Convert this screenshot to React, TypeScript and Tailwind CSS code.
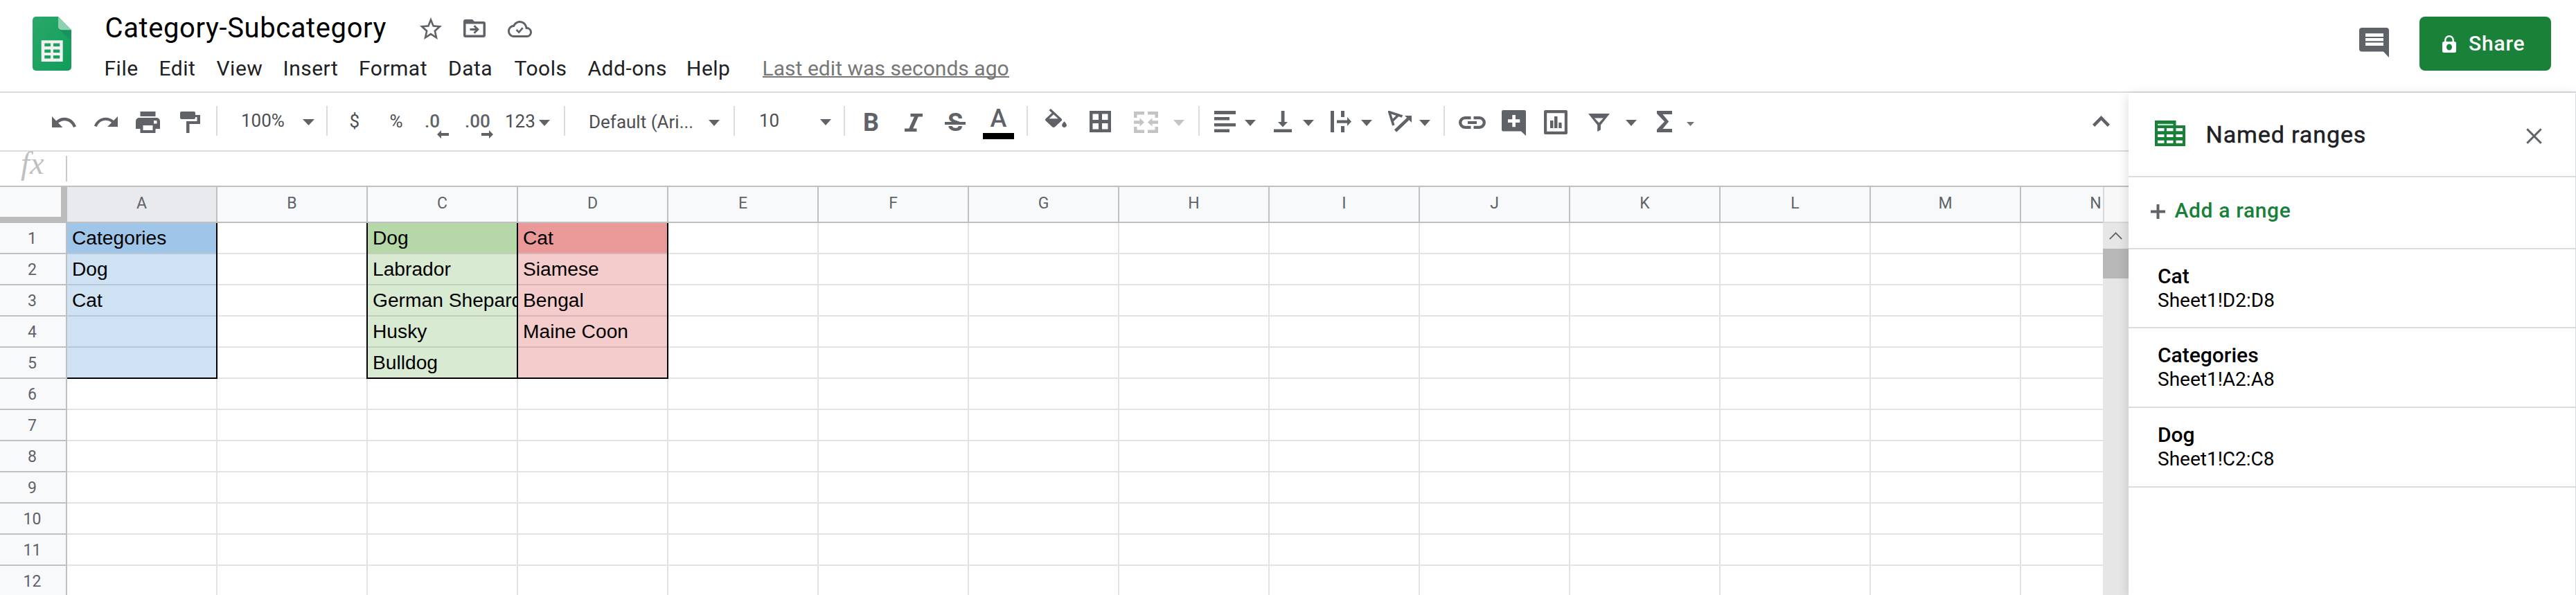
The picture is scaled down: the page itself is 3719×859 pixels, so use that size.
import React from 'react';

type GlyphProps = { c: string; vb: string; children: React.ReactNode };

function Glyph({ c, vb, children }: GlyphProps) {
  return (
    <svg className={'block shrink-0 ' + c} viewBox={vb} preserveAspectRatio="none" fill="currentColor" aria-hidden="true">
      {children}
    </svg>
  );
}

function Caret({ c }: { c: string }) {
  return (
    <Glyph c={c} vb="0 0 16 9">
      <path d="M0 0h16L8 9z" />
    </Glyph>
  );
}

function Divider({ c }: { c: string }) {
  return <div className={'mt-[19px] h-[43px] w-[2px] shrink-0 bg-[#dadce0] ' + c} />;
}

const MENUS = [
  { label: 'File', w: 'w-[79px]' },
  { label: 'Edit', w: 'w-[83px]' },
  { label: 'View', w: 'w-[96px]' },
  { label: 'Insert', w: 'w-[109.5px]' },
  { label: 'Format', w: 'w-[129px]' },
  { label: 'Data', w: 'w-[95.5px]' },
  { label: 'Tools', w: 'w-[106px]' },
  { label: 'Add-ons', w: 'w-[142.5px]' },
  { label: 'Help', w: 'w-[105.5px]' },
];

function Header() {
  return (
    <header className="flex h-[134px] items-start border-b-2 border-[#dadce0]">
      <svg className="mt-[24px] ml-[47px] h-[78px] w-[56px] shrink-0" viewBox="0 0 56 78">
        <defs>
          <linearGradient id="sheet" x1="0" y1="0" x2="1" y2="1">
            <stop offset="0" stopColor="#2aa86b" />
            <stop offset="1" stopColor="#0f9d58" />
          </linearGradient>
          <linearGradient id="fold" x1="0" y1="0" x2="1" y2="1">
            <stop offset="0" stopColor="#178a5c" />
            <stop offset="1" stopColor="#1a9a62" />
          </linearGradient>
        </defs>
        <path d="M5 0h32l19 19.3V73a5 5 0 0 1-5 5H5a5 5 0 0 1-5-5V5a5 5 0 0 1 5-5z" fill="url(#sheet)" />
        <path d="M38.500 18L56 36V19.300z" fill="url(#fold)" />
        <path d="M37 0l19 19.300H42a5 5 0 0 1-5-5z" fill="#8ed1b1" />
        <path
          fillRule="evenodd"
          fill="#f1f1f1"
          d="M12.700 34.300h31V65h-31zM17.300 38.500v4.500H26v-4.500zM30 38.500v4.500h9.300v-4.500zM17.300 47.500V52H26v-4.500zM30 47.500V52h9.300v-4.500zM17.300 56v4.500H26V56zM30 56v4.500h9.300V56z"
        />
      </svg>
      <div className="ml-[47.500px] flex flex-col">
        <div className="flex h-[79px] items-start text-[#5f6368]">
          <div className="mt-[17px] ml-[1px] w-[454px] text-[40px] leading-[48px] tracking-[0.600px] whitespace-nowrap text-black">
            Category-Subcategory
          </div>
          <Glyph c="mt-[25px] h-[32px] w-[32px]" vb="2 2 20 19">
            <path d="M22 9.240l-7.190-.620L12 2 9.190 8.630 2 9.240l5.460 4.730L5.820 21 12 17.270 18.180 21l-1.630-7.030L22 9.240zM12 15.400l-3.760 2.270 1-4.280-3.320-2.880 4.380-.380L12 6.100l1.710 4.040 4.380.380-3.320 2.880 1 4.280L12 15.400z" />
          </Glyph>
          <Glyph c="mt-[28px] ml-[31px] h-[26px] w-[32px]" vb="0 0 32 26">
            <path fillRule="evenodd" d="M3 0h10l3 3h13a3 3 0 0 1 3 3v17a3 3 0 0 1-3 3H3a3 3 0 0 1-3-3V3a3 3 0 0 1 3-3zM3.500 6.500v16h25v-16z" />
            <path d="M9.500 14.500H20M15.500 9.200l5.300 5.300-5.300 5.300" fill="none" stroke="currentColor" strokeWidth="3" />
          </Glyph>
          <Glyph c="mt-[30px] ml-[32px] h-[24px] w-[35px]" vb="0 4 24 16">
            <path d="M19.350 10.040C18.670 6.590 15.640 4 12 4 9.110 4 6.600 5.640 5.350 8.040 2.340 8.360 0 10.910 0 14c0 3.310 2.690 6 6 6h13c2.760 0 5-2.240 5-5 0-2.640-2.050-4.780-4.650-4.960zM19 18H6c-2.210 0-4-1.790-4-4 0-2.050 1.530-3.760 3.560-3.970l1.070-.110.500-.950C8.080 7.140 9.940 6 12 6c2.620 0 4.880 1.860 5.390 4.430l.300 1.500 1.530.110c1.560.100 2.780 1.410 2.780 2.960 0 1.650-1.350 3-3 3z" />
            <path d="M8.600 12.700l2.500 2.400 3.800-4.300" fill="none" stroke="currentColor" strokeWidth="1.800" />
          </Glyph>
        </div>
        <nav className="flex text-[30px] leading-[40px] tracking-[0.500px] whitespace-nowrap text-[#202124]">
          {MENUS.map((m) => (
            <div key={m.label} className={m.w}>
              {m.label}
            </div>
          ))}
          <a className="ml-[4px] h-[33px] border-b-2 border-[#777] tracking-[0.040px] text-[#777]">Last edit was seconds ago</a>
        </nav>
      </div>
      <Glyph c="mt-[40px] ml-auto h-[43px] w-[43px] text-[#5f6368]" vb="0 0 43 43">
        <path fillRule="evenodd" d="M4 0h35a4 4 0 0 1 4 4v39l-8-8.500H4a4 4 0 0 1-4-4V4a4 4 0 0 1 4-4zM9 8.300V13h26V8.300zM9 15v4.300h26V15zM9 21.500V26h26v-4.500z" />
      </Glyph>
      <button className="mt-[24px] mr-[36px] ml-[44px] flex h-[78px] w-[190px] items-center rounded-[8px] bg-[#1a8139] pl-[33px] text-white">
        <Glyph c="h-[25px] w-[20px]" vb="0 0 20 25">
          <path fillRule="evenodd" d="M2.500 9H3V7a7 7 0 0 1 14 0v2h.500A2.500 2.500 0 0 1 20 11.500v11a2.500 2.500 0 0 1-2.500 2.500h-15A2.500 2.500 0 0 1 0 22.500v-11A2.500 2.500 0 0 1 2.500 9zM5.500 9h9V7a4.500 4.500 0 0 0-9 0zM10 12.500a4 4.500 0 1 0 0 9 4 4.500 0 1 0 0-9z" />
        </Glyph>
        <span className="ml-[18px] text-[30px] leading-[40px] font-medium tracking-[0.800px]">Share</span>
      </button>
    </header>
  );
}

function Toolbar() {
  return (
    <div className="flex h-[85px] items-start border-b-2 border-[#dadce0] text-[26px] leading-[32px] whitespace-nowrap text-[#5f6368]">
      <Glyph c="mt-[34px] ml-[75px] h-[16px] w-[35px]" vb="2 7 20.470 9">
        <path d="M12.500 8c-2.650 0-5.050.990-6.900 2.600L2 7v9h9l-3.620-3.620c1.390-1.160 3.160-1.880 5.120-1.880 3.540 0 6.550 2.310 7.600 5.500l2.370-.780C21.080 11.030 17.150 8 12.500 8z" />
      </Glyph>
      <Glyph c="mt-[34px] ml-[26px] h-[15px] w-[34px]" vb="1.540 7 20.460 9">
        <path d="M18.400 10.600C16.550 8.990 14.150 8 11.500 8c-4.650 0-8.580 3.030-9.960 7.220L3.900 16c1.050-3.190 4.050-5.500 7.600-5.500 1.950 0 3.730.720 5.120 1.880L13 16h9V7l-3.600 3.600z" />
      </Glyph>
      <Glyph c="mt-[27px] ml-[26px] h-[31px] w-[35px]" vb="0 0 35 31">
        <path fillRule="evenodd" d="M6.500 0h22v7h-22zM5 9h25a5 5 0 0 1 5 5v11h-6.500v6h-22v-6H0V14a5 5 0 0 1 5-5zM10.500 20v7h14v-7zM26 13v4.500h4.500V13z" />
      </Glyph>
      <Glyph c="mt-[27px] ml-[29px] h-[31px] w-[29px]" vb="0 0 29 31">
        <path d="M2 0h18a2 2 0 0 1 2 2v3h7v13H13.500v13H9V14h15.500V8H22v1a2 2 0 0 1-2 2H2a2 2 0 0 1-2-2V2a2 2 0 0 1 2-2z" />
      </Glyph>
      <Divider c="ml-[23px]" />
      <div className="mt-[24px] ml-[34px] w-[89px]">
        <div className="text-[#4d4f52]">100%</div>
      </div>
      <Caret c="mt-[38px] h-[9px] w-[17px]" />
      <Divider c="ml-[17px]" />
      <div className="mt-[25px] ml-[31.500px] w-[58px] text-[#4d4f52]">$</div>
      <div className="mt-[25px] w-[51.500px] text-[#4d4f52]">%</div>
      <div className="mt-[25px] flex h-[40px] w-[34px] flex-col font-medium">
        <div className="h-[28.500px] -ml-[1px]">.0</div>
        <Glyph c="h-[12px] w-[17px] self-end" vb="0 0 17 12">
          <path d="M0 6l6-6v4h11v4H6v4z" />
        </Glyph>
      </div>
      <div className="mt-[25px] ml-[24px] flex h-[40px] w-[40px] flex-col font-medium">
        <div className="h-[28.500px] -ml-[1px]">.00</div>
        <Glyph c="h-[12px] w-[17px] self-end" vb="0 0 17 12">
          <path d="M17 6l-6-6v4H0v4h11v4z" />
        </Glyph>
      </div>
      <div className="mt-[25px] ml-[17px] w-[49px] text-[#4d4f52]">123</div>
      <Caret c="mt-[39px] h-[9px] w-[16px]" />
      <Divider c="ml-[20px]" />
      <div className="mt-[26px] ml-[34px] w-[173px] text-[#4d4f52]">Default (Ari...</div>
      <Caret c="mt-[39px] h-[9px] w-[16px]" />
      <Divider c="ml-[20px]" />
      <div className="mt-[24px] ml-[35px] w-[88px] text-[#4d4f52]">10</div>
      <Caret c="mt-[38px] h-[9px] w-[16px]" />
      <Divider c="ml-[18px]" />
      <div className="mt-[23px] ml-[26px] w-[23px] text-[36px] leading-[40px] font-bold">B</div>
      <Glyph c="mt-[30px] ml-[37px] h-[26px] w-[26px]" vb="0 0 26 26">
        <path d="M8.500 0H26v4.500h-6.200L12.200 21.500h5.300V26H0v-4.500h6.300L13.900 4.500H8.500z" />
      </Glyph>
      <div className="relative mt-[23px] ml-[32px] w-[30px] text-center text-[36px] leading-[40px] font-bold">
        S
        <div className="absolute top-[19px] left-0 h-[6px] w-[30px] border-b-2 border-white bg-[#5f6368]" />
      </div>
      <div className="mt-[17px] ml-[25px] flex w-[45px] flex-col text-center text-[36px] leading-[40px] font-medium">
        <div className="h-[41px]">A</div>
        <div className="h-[9px] bg-black" />
      </div>
      <Divider c="ml-[18px]" />
      <Glyph c="mt-[23px] ml-[25px] h-[27px] w-[31px]" vb="3 0 18 17">
        <path d="M16.560 8.940L7.620 0 6.210 1.410l2.380 2.380-5.150 5.150c-.590.590-.590 1.540 0 2.120l5.500 5.500c.290.290.680.440 1.060.440s.770-.150 1.060-.440l5.500-5.500c.590-.580.590-1.530 0-2.120zM6.210 9L10 5.210 13.790 9H6.210zM19 11.500s-2 2.170-2 3.500c0 1.100.900 2 2 2s2-.900 2-2c0-1.330-2-3.500-2-3.500z" />
      </Glyph>
      <Glyph c="mt-[26px] ml-[33px] h-[31px] w-[31px]" vb="0 0 31 31">
        <path fillRule="evenodd" d="M0 0h31v31H0zM4.500 4.500V13H13V4.500zM18 4.500V13h8.500V4.500zM4.500 18v8.500H13V18zM18 18v8.500h8.500V18z" />
      </Glyph>
      <Glyph c="mt-[27px] ml-[33px] h-[31px] w-[35px] text-[#c3c4c6]" vb="0 0 35 31">
        <path d="M0 0h15v4.500H4.500V9H0zM20 0h15v9h-4.500V4.500H20zM0 22h4.500v4.500H15V31H0zM30.500 22H35v9H20v-4.500h10.500zM0 13.300h8.500V9.500l6.500 6-6.500 6v-3.800H0zM35 13.300h-8.500V9.500l-6.500 6 6.500 6v-3.800H35z" />
      </Glyph>
      <Caret c="mt-[39px] ml-[22px] h-[9px] w-[16px] text-[#c3c4c6]" />
      <Divider c="ml-[20px]" />
      <Glyph c="mt-[26px] ml-[21px] h-[31px] w-[31px]" vb="0 0 31 31">
        <path d="M0 0h31v5H0zM0 9h22v4.500H0zM0 18h31v4.500H0zM0 26.500h22V31H0z" />
      </Glyph>
      <Caret c="mt-[39px] ml-[13px] h-[9px] w-[16px]" />
      <Glyph c="mt-[26px] ml-[26px] h-[31px] w-[26px]" vb="0 0 26 31">
        <path d="M10.700 0h4.800v16h4.500l-7 7.500-7-7.500h4.700zM0 26.500h26V31H0z" />
      </Glyph>
      <Caret c="mt-[39px] ml-[16px] h-[9px] w-[16px]" />
      <Glyph c="mt-[26px] ml-[24px] h-[31px] w-[30px]" vb="0 0 30 31">
        <path d="M0 0h5v31H0zM15 0h5v9h-5zM15 22h5v9h-5zM9 13.500h15V9l6 6.500-6 6.500v-4.300H9z" />
      </Glyph>
      <Caret c="mt-[39px] ml-[14px] h-[9px] w-[16px]" />
      <Glyph c="mt-[26px] ml-[23px] h-[31px] w-[34px]" vb="0 0 34 31">
        <path d="M7.800 21L1.800 1.800 20.500 8M6.200 14.500L14.500 6.500" fill="none" stroke="currentColor" strokeWidth="3.600" />
        <path d="M10.500 29L29 11.500" fill="none" stroke="currentColor" strokeWidth="4.600" />
        <path d="M24 7h10v10z" />
      </Glyph>
      <Caret c="mt-[39px] ml-[11px] h-[9px] w-[16px]" />
      <Divider c="ml-[19px]" />
      <Glyph c="mt-[34px] ml-[20px] h-[18px] w-[39px]" vb="0 0 39 18">
        <path d="M17.500 2.200H9a6.800 6.800 0 0 0 0 13.600h8.500M21.500 2.200H30a6.800 6.800 0 0 1 0 13.600h-8.500" fill="none" stroke="currentColor" strokeWidth="4.300" />
        <path d="M13 7h13v4H13z" />
      </Glyph>
      <Glyph c="mt-[25px] ml-[23px] h-[37px] w-[35px]" vb="0 0 35 37">
        <path fillRule="evenodd" d="M2 0h31a2 2 0 0 1 2 2v35l-7-6.500H2a2 2 0 0 1-2-2V2a2 2 0 0 1 2-2zM15.300 7v6.300H9V18h6.300v6.300H20V18h6.300v-4.700H20V7z" />
      </Glyph>
      <Glyph c="mt-[25px] ml-[26px] h-[35px] w-[34px]" vb="0 0 34 35">
        <path fillRule="evenodd" d="M2 0h30a2 2 0 0 1 2 2v31a2 2 0 0 1-2 2H2a2 2 0 0 1-2-2V2a2 2 0 0 1 2-2zM4.200 4.200v26.600h25.600V4.200z" />
        <path d="M9 15h4.500v11H9zM15 9h4.500v17H15zM21.300 18h4.300v8h-4.300z" />
      </Glyph>
      <Glyph c="mt-[30px] ml-[30px] h-[26px] w-[31px]" vb="0 0 31 26">
        <path fillRule="evenodd" d="M0 0h31L17.900 16.500v7L13.200 26v-9.500zM9 6.500l6.500 6.800 6.300-6.800z" />
      </Glyph>
      <Caret c="mt-[39px] ml-[23px] h-[9px] w-[16px]" />
      <Glyph c="mt-[26px] ml-[29px] h-[31px] w-[22px]" vb="0 0 22 31">
        <path d="M0 0h22v5H8.500l8.700 10.500L8.500 26H22v5H0v-4l11-11.500L0 4z" />
      </Glyph>
      <Caret c="mt-[42px] ml-[21px] h-[6px] w-[11px] text-[#757575]" />
      <Glyph c="mt-[33px] ml-[575px] h-[16px] w-[25px]" vb="0 0 25 16">
        <path d="M12.500 0L25 12.700 21.800 16l-9.300-9.500L3.200 16 0 12.700z" />
      </Glyph>
    </div>
  );
}

const COLUMNS = ['A', 'B', 'C', 'D', 'E', 'F', 'G', 'H', 'I', 'J', 'K', 'L', 'M', 'N'];
const ROWS = [1, 2, 3, 4, 5, 6, 7, 8, 9, 10, 11, 12];

const DATA: Record<string, string[]> = {
  A: ['Categories', 'Dog', 'Cat', '', ''],
  C: ['Dog', 'Labrador', 'German Shepard', 'Husky', 'Bulldog'],
  D: ['Cat', 'Siamese', 'Bengal', 'Maine Coon', ''],
};

const HEAD_FILL: Record<string, string> = { A: 'bg-[#9fc5e8]', C: 'bg-[#b6d7a8]', D: 'bg-[#ea9999]' };
const BODY_FILL: Record<string, string> = { A: 'bg-[#cfe2f3]', C: 'bg-[#d9ead3]', D: 'bg-[#f4cccc]' };
const HEAD_LINE: Record<string, string> = { A: 'border-[#b7c9d9]', C: 'border-[#c0d0bb]', D: 'border-[#d9b6b6]' };

function Cell({ col, row }: { col: string; row: number }) {
  const inTable = row <= 5;
  const filled = inTable && col in DATA;
  const fill = filled ? (row === 1 ? HEAD_FILL[col] : BODY_FILL[col]) : '';
  const bottom = filled ? (row === 5 ? 'border-black' : HEAD_LINE[col]) : 'border-[#e2e3e3]';
  const edge = inTable && 'ABCD'.includes(col) ? 'bg-black' : 'bg-[#e2e3e3]';
  return (
    <div className="flex h-[45px] w-[217px] shrink-0">
      <div className={'w-[215px] overflow-hidden border-b-2 pl-[7px] leading-[43px] whitespace-nowrap text-black ' + fill + ' ' + bottom}>
        {filled ? DATA[col][row - 1] : ''}
      </div>
      <div className={'w-[2px] ' + edge} />
    </div>
  );
}

function Grid() {
  return (
    <div className="flex min-h-0 flex-1">
      <div className="w-[3036px] shrink-0 overflow-hidden">
        <div className="flex h-[52px] text-[23px] text-[#5f6368]">
          <div className="w-[97px] shrink-0 border-r-[9px] border-b-[9px] border-[#bcbcbc] bg-[#f8f9fb]" />
          {COLUMNS.map((c) => (
            <div
              key={c}
              className={
                'w-[217px] shrink-0 border-r-2 border-b-2 border-[#c0c0c0] text-center leading-[48px] ' +
                (c === 'A' ? 'bg-[#e8eaed]' : 'bg-[#f8f9fb]')
              }
            >
              {c}
            </div>
          ))}
        </div>
        {ROWS.map((r) => (
          <div key={r} className="flex h-[45px] text-[28.200px]">
            <div className="w-[97px] shrink-0 border-r-2 border-b-2 border-[#c0c0c0] bg-[#f8f9fb] pr-[2px] text-center font-[Roboto,sans-serif] text-[23px] leading-[45px] text-[#5f6368]">
              {r}
            </div>
            <div className="flex font-['Liberation_Sans',Arial,sans-serif]">
              {COLUMNS.map((c) => (
                <Cell key={c} col={c} row={r} />
              ))}
            </div>
          </div>
        ))}
      </div>
      <div className="flex w-[37px] flex-col bg-[#e6e6e6]">
        <div className="h-[52px] border-b-2 border-l-2 border-[#d9d9d9] bg-[#f8f8f8]" />
        <div className="flex h-[37px] justify-center pt-[13px]">
          <Glyph c="h-[11px] w-[19px]" vb="0 0 19 11">
            <path d="M.8 10.200L9.500 1.300l8.700 8.900" fill="none" stroke="#606060" strokeWidth="1.700" />
          </Glyph>
        </div>
        <div className="h-[43px] bg-[#b8b8b8]" />
      </div>
    </div>
  );
}

const RANGES = [
  { name: 'Cat', ref: 'Sheet1!D2:D8', h: 'h-[114px]' },
  { name: 'Categories', ref: 'Sheet1!A2:A8', h: 'h-[115px]' },
  { name: 'Dog', ref: 'Sheet1!C2:C8', h: 'h-[115px]' },
];

function NamedRanges() {
  return (
    <aside className="z-10 flex w-[646px] shrink-0 flex-col border-r border-[#dadce0] bg-white shadow-[0_4px_16px_rgba(0,0,0,0.16)]">
      <div className="flex h-[122px] items-start border-b-2 border-[#dadce0]">
        <Glyph c="mt-[40px] ml-[38px] h-[37px] w-[44px] text-[#188038]" vb="0 0 44 37">
          <path
            fillRule="evenodd"
            d="M0 0h30.500v7H44v30H0zM4 11v4.300h9.500V11zM17 11v4.300h9.500V11zM30.500 11v4.300H40V11zM4 20v4h9.500v-4zM17 20v4h9.500v-4zM30.500 20v4H40v-4zM4 28.700v4h9.500v-4zM17 28.700v4h9.500v-4zM30.500 28.700v4H40v-4z"
          />
          <path d="M4 4.800h22.500V7H4z" fill="#c5e3cd" />
        </Glyph>
        <h2 className="mt-[39.500px] ml-[29.500px] text-[34px] leading-[40px] tracking-[0.900px] text-[#202124] [-webkit-text-stroke:0.500px_#202124]">
          Named ranges
        </h2>
        <Glyph c="mt-[51px] mr-[48px] ml-auto h-[23px] w-[23px] text-[#5f6368]" vb="0 0 23 23">
          <path d="M1.300 1.300l20.400 20.400M21.700 1.300L1.300 21.700" fill="none" stroke="currentColor" strokeWidth="3" />
        </Glyph>
      </div>
      <div className="flex h-[104px] items-start border-b-2 border-[#dadcdc]">
        <Glyph c="mt-[39px] ml-[32px] h-[21px] w-[21px] text-[#5f6368]" vb="0 0 21 21">
          <path d="M8.500 0h4v8.500H21v4h-8.500V21h-4v-8.500H0v-4h8.500z" />
        </Glyph>
        <span className="mt-[28px] ml-[13.500px] text-[30px] leading-[40px] font-medium tracking-[0.650px] text-[#188038]">Add a range</span>
      </div>
      {RANGES.map((r) => (
        <div key={r.name} className={'flex flex-col border-b-2 border-[#dcdcdc] pt-[19px] pl-[42px] text-black ' + r.h}>
          <div className="h-[35px] text-[30px] leading-[40px] font-medium">{r.name}</div>
          <div className="text-[28px] leading-[40px]">{r.ref}</div>
        </div>
      ))}
    </aside>
  );
}

export default function App() {
  return (
    <div className="flex h-[859px] w-[3719px] flex-col overflow-hidden bg-white font-[Roboto,sans-serif]">
      <Header />
      <div className="flex min-h-0 flex-1">
        <main className="flex w-[3073px] shrink-0 flex-col">
          <Toolbar />
          <div className="flex h-[51px] shrink-0 border-b-2 border-[#c0c0c0]">
            <div className="w-[95px] pl-[30px] font-['Liberation_Serif',serif] text-[46px] leading-[33px] tracking-[0.500px] text-[#c0c0c0] italic">fx</div>
            <div className="mt-[6px] h-[37px] w-[2px] bg-[#c9c9c9]" />
          </div>
          <Grid />
        </main>
        <NamedRanges />
      </div>
    </div>
  );
}
